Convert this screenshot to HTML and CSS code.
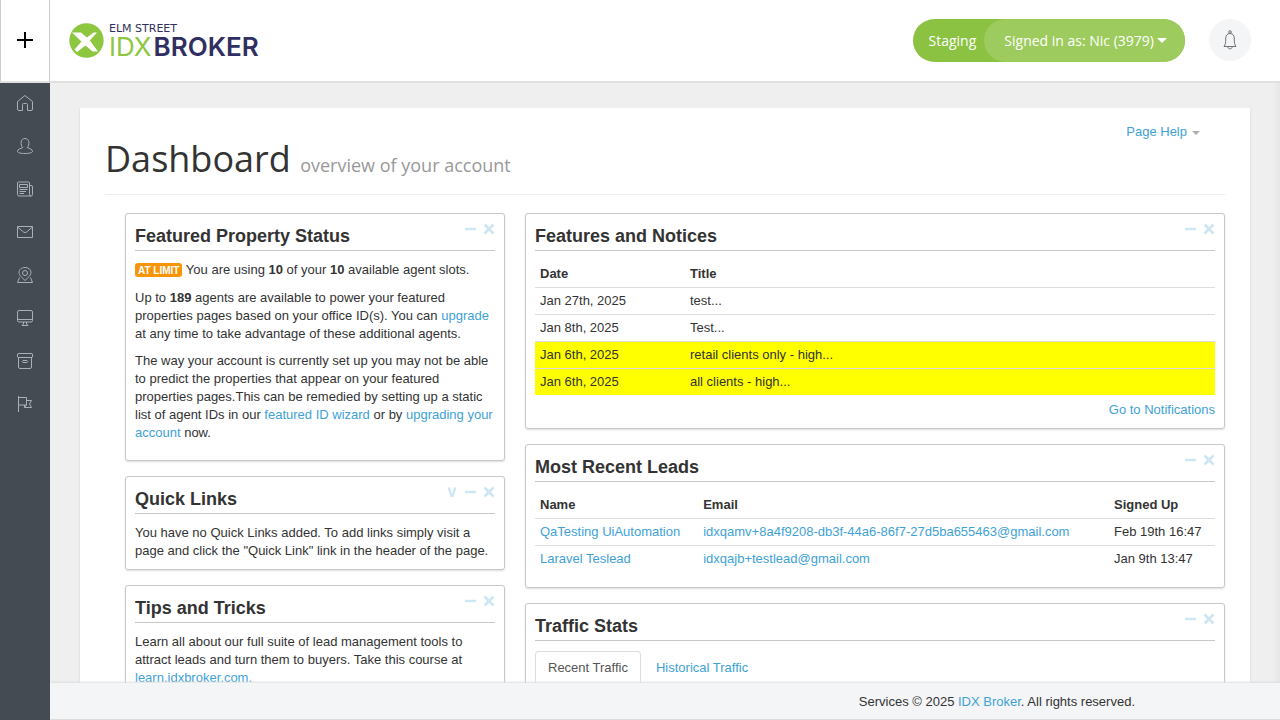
FILE: index.html
```html
<!DOCTYPE html>
<html lang="en">
<head>
<meta charset="utf-8">
<title>Dashboard - IDX Broker</title>
<link rel="stylesheet" href="styles.css">
</head>
<body>
<svg class="sprite" aria-hidden="true">
  <symbol id="minus" viewBox="0 0 12 12"><path d="M1 6H12" stroke="currentColor" stroke-width="2.400" fill="none"/></symbol>
  <symbol id="close" viewBox="0 0 12 12"><path d="M1.500 1.500L10.500 10.500M10.500 1.500L1.500 10.500" stroke="currentColor" stroke-width="2.500" fill="none"/></symbol>
  <symbol id="down" viewBox="0 0 12 12"><path d="M2.500 1.500H5L7 8L9 1.500H11.500L8.300 11H5.700Z" fill="currentColor"/></symbol>
</svg>
<header class="topbar">
  <button class="add" aria-label="Add"><svg width="16" height="16" viewBox="0 0 16 16"><path d="M8 0V16M0 8H16" stroke="#000" stroke-width="2"/></svg></button>
  <a class="logo" href="#">
    <svg width="35" height="35" viewBox="0 0 35 35"><circle cx="17.500" cy="17.500" r="17.200" fill="#8dc63f"/><path d="M3 9.500H12L18 14.500L24.500 9.500H28L20.800 17.500L29 28.500H23.500L16.500 22.500L8 29L5.500 26.500L12.500 18.500Z" fill="#fff"/></svg>
    <span class="logo-words"><span class="logo-small">ELM STREET</span><span class="logo-big"><span class="logo-idx">IDX</span>BROKER</span></span>
  </a>
  <div class="account">
    <span class="env">Staging</span>
    <button class="user">Signed in as: Nic (3979)<span class="caret"></span></button>
  </div>
  <button class="bell" aria-label="Notifications"><svg width="14" height="20" viewBox="0 0 14 20" fill="none" stroke="#6b7278"><circle cx="7" cy="2" r="1.300"/><path d="M1 16.500C2.500 14.500 2.700 13 2.700 9C2.700 5.500 4 3.500 7 3.500S11.300 5.500 11.300 9C11.300 13 11.500 14.500 13 16.500ZM4.800 16.500C4.800 19.700 9.200 19.700 9.200 16.500"/></svg></button>
</header>
<div class="shell">
  <nav class="sidebar" aria-label="Main">
    <a href="#" aria-label="Home"><svg viewBox="0 0 16 16"><path d="M.5 6.500L8 .5L15.500 6.500V14Q15.500 15.500 14 15.500H10.500V9.500Q10.500 8.500 9.500 8.500H6.500Q5.500 8.500 5.500 9.500V15.500H2Q.5 15.500 .5 14Z"/></svg></a>
    <a href="#" aria-label="Leads"><svg viewBox="0 0 16 16"><path d="M5.800 9.500C3.200 7 3.200 .5 8 .5S12.800 7 10.200 9.500C12.500 10.800 15.500 11 15.500 13.500C15.500 14.700 12 15.500 8 15.500S.5 14.700 .5 13.500C.5 11 3.500 10.800 5.800 9.500Z"/></svg></a>
    <a href="#" aria-label="Content"><svg viewBox="0 0 16 16"><path d="M12.500 13.500V2Q12.500 1 11.500 1H1.500Q.5 1 .5 2V13.500Q.5 15 2 15H14Q15.500 15 15.500 13.500V6Q15.500 4.500 14 4.500H12.500M12.500 13.500Q12.500 15 14 15M2.500 3.500H10.500V6.500H2.500ZM2.500 8.500H10.500M2.500 10.500H9M2.500 12.500H7"/></svg></a>
    <a href="#" aria-label="Messages"><svg viewBox="0 0 16 16"><path d="M.5 2.500H15.500V13.500H.5ZM.5 3L6.500 8Q8 9.200 9.500 8L15.500 3"/></svg></a>
    <a href="#" aria-label="Map"><svg viewBox="0 0 16 16"><circle cx="8" cy="6" r="2.500"/><path d="M8 13.500C5 10.500 2 8.500 2 5.500C2 2.500 4.500 .5 8 .5S14 2.500 14 5.500C14 8.500 11 10.500 8 13.500ZM2.500 10.500L.5 15.500H15.500L13.500 10.500"/></svg></a>
    <a href="#" aria-label="Design"><svg viewBox="0 0 16 16"><path d="M2 .5H14Q15.500 .5 15.500 2V10.500Q15.500 12 14 12H2Q.5 12 .5 10.500V2Q.5 .5 2 .5ZM.5 9.500H15.500M6.500 12V14L5 15.500H11L9.500 14V12"/></svg></a>
    <a href="#" aria-label="Archive"><svg viewBox="0 0 16 16"><path d="M1 .5H15L15.500 1V4L15 4.500H1L.5 4V1ZM1.500 4.500V14Q1.500 15.500 3 15.500H13Q14.500 15.500 14.500 14V4.500M6 7.500H10Q11.500 8.500 10 9.500H6Q4.500 8.500 6 7.500Z"/></svg></a>
    <a href="#" aria-label="Reports"><svg viewBox="0 0 16 16"><path d="M1.500 0V16M1.500 1.500H9.500V9H1.500M9.500 4.500H14.500L12.500 8L14.500 11.500H7.500V9M9.500 9L7.500 11.500"/></svg></a>
  </nav>
  <div class="main">
    <main class="scroll">
      <div class="sheet">
        <div class="page-head">
          <a class="help" href="#">Page Help<span class="caret"></span></a>
          <h1>Dashboard <small>overview of your account</small></h1>
        </div>
        <div class="columns">
          <div class="column narrow">
            <section class="widget">
              <div class="widget-head"><h2>Featured Property Status</h2><div class="tools"><button aria-label="Minimize"><svg><use href="#minus"/></svg></button><button aria-label="Close"><svg><use href="#close"/></svg></button></div></div>
              <p class="status"><span class="badge">AT LIMIT</span> You are using <b>10</b> of your <b>10</b> available agent slots.</p>
              <p>Up to <b>189</b> agents are available to power your featured properties pages based on your office ID(s). You can <a href="#">upgrade</a> at any time to take advantage of these additional agents.</p>
              <p>The way your account is currently set up you may not be able to predict the properties that appear on your featured properties pages.This can be remedied by setting up a static list of agent IDs in our <a href="#">featured ID wizard</a> or by <a href="#">upgrading your account</a> now.</p>
            </section>
            <section class="widget">
              <div class="widget-head"><h2>Quick Links</h2><div class="tools"><button aria-label="Expand"><svg><use href="#down"/></svg></button><button aria-label="Minimize"><svg><use href="#minus"/></svg></button><button aria-label="Close"><svg><use href="#close"/></svg></button></div></div>
              <div>You have no Quick Links added. To add links simply visit a page and click the "Quick Link" link in the header of the page.</div>
            </section>
            <section class="widget">
              <div class="widget-head"><h2>Tips and Tricks</h2><div class="tools"><button aria-label="Minimize"><svg><use href="#minus"/></svg></button><button aria-label="Close"><svg><use href="#close"/></svg></button></div></div>
              <p>Learn all about our full suite of lead management tools to attract leads and turn them to buyers. Take this course at <a href="#">learn.idxbroker.com.</a></p>
            </section>
          </div>
          <div class="column wide">
            <section class="widget">
              <div class="widget-head"><h2>Features and Notices</h2><div class="tools"><button aria-label="Minimize"><svg><use href="#minus"/></svg></button><button aria-label="Close"><svg><use href="#close"/></svg></button></div></div>
              <table class="notices">
                <thead><tr><th>Date</th><th>Title</th></tr></thead>
                <tbody>
                  <tr><td>Jan 27th, 2025</td><td>test...</td></tr>
                  <tr><td>Jan 8th, 2025</td><td>Test...</td></tr>
                  <tr class="high"><td>Jan 6th, 2025</td><td>retail clients only - high...</td></tr>
                  <tr class="high"><td>Jan 6th, 2025</td><td>all clients - high...</td></tr>
                </tbody>
              </table>
              <div class="more"><a href="#">Go to Notifications</a></div>
            </section>
            <section class="widget">
              <div class="widget-head"><h2>Most Recent Leads</h2><div class="tools"><button aria-label="Minimize"><svg><use href="#minus"/></svg></button><button aria-label="Close"><svg><use href="#close"/></svg></button></div></div>
              <table class="leads">
                <thead><tr><th>Name</th><th>Email</th><th>Signed Up</th></tr></thead>
                <tbody>
                  <tr><td><a href="#">QaTesting UiAutomation</a></td><td><a href="#">idxqamv+8a4f9208-db3f-44a6-86f7-27d5ba655463@gmail.com</a></td><td>Feb 19th 16:47</td></tr>
                  <tr><td><a href="#">Laravel Teslead</a></td><td><a href="#">idxqajb+testlead@gmail.com</a></td><td>Jan 9th 13:47</td></tr>
                </tbody>
              </table>
            </section>
            <section class="widget">
              <div class="widget-head"><h2>Traffic Stats</h2><div class="tools"><button aria-label="Minimize"><svg><use href="#minus"/></svg></button><button aria-label="Close"><svg><use href="#close"/></svg></button></div></div>
              <div class="tabs"><a class="tab active" href="#">Recent Traffic</a><a class="tab" href="#">Historical Traffic</a></div>
            </section>
          </div>
        </div>
      </div>
    </main>
    <footer class="footer">Services © 2025 <a href="#">IDX Broker</a>. All rights reserved.</footer>
  </div>
</div>
</body>
</html>
```
FILE: styles.css
```css
* { box-sizing: border-box; }
body {
  margin: 0;
  height: 100vh;
  display: flex;
  flex-direction: column;
  overflow: hidden;
  background: #efefef;
  color: #333;
  font: 13px/18px "Liberation Sans", Arial, sans-serif;
}
a { color: #3ea2d6; text-decoration: none; }
button { padding: 0; border: 0; background: none; color: inherit; font: inherit; cursor: pointer; }
.sprite { display: none; }

.topbar {
  display: flex;
  align-items: center;
  flex: none;
  height: 83px;
  padding-right: 29px;
  background: #fff;
  border-bottom: 2px solid #e0e0e0;
}
.add {
  display: grid;
  place-items: center;
  align-self: stretch;
  width: 50px;
  padding-bottom: 1px;
  border: solid #ccc;
  border-width: 0 1px;
}
.logo { display: flex; gap: 5px; margin-left: 19px; color: #2f3061; font-family: Inter, sans-serif; }
.logo-words { display: flex; flex-direction: column; }
.logo-small { font: 11px/11px "DejaVu Sans", sans-serif; }
.logo-big { font-size: 26px; line-height: 25px; font-weight: 600; }
.logo-idx { margin-right: 2px; color: #8dc63f; font-weight: 400; }
.account {
  display: flex;
  align-items: center;
  margin-left: auto;
  height: 43px;
  border-radius: 22px;
  background: #8bc242;
  color: #fff;
  font: 14px/20px "Open Sans", sans-serif;
}
.env { padding: 0 8px 0 16px; }
.user {
  display: flex;
  align-items: center;
  gap: 3px;
  height: 43px;
  padding: 0 18px 0 20px;
  border-radius: 22px;
  background: #9dcb5d;
}
.caret {
  display: inline-block;
  border: 5px solid transparent;
  border-top-color: currentColor;
  border-bottom: 0;
}
.bell {
  display: grid;
  place-items: center;
  width: 42px;
  height: 42px;
  margin: 0 0 1px 24px;
  border-radius: 50%;
  background: #f4f5f7;
}

.shell { display: flex; flex: 1; min-height: 0; }
.sidebar { position: relative; z-index: 1; flex: none; width: 50px; background: #444b52; }
.sidebar a { display: grid; place-items: center; height: 43px; padding-bottom: 3px; }
.sidebar svg { width: 16px; height: 16px; fill: none; stroke: #a9b0b6; }
.main { display: flex; flex-direction: column; flex: 1; min-width: 0; }
.scroll {
  flex: 1;
  min-height: 0;
  padding: 25px 30px;
  overflow-y: auto;
  scrollbar-width: none;
  background: linear-gradient(to left, #e6e6e6, #efefef 8px);
}
.sheet { padding: 15px 25px 25px; background: #fff; box-shadow: 0 1px 2px #ccc; }
.page-head { border-bottom: 1px solid #eee; margin-bottom: 18px; }
.help { display: block; padding-right: 25px; text-align: right; }
.help .caret { margin-left: 5px; color: #b0b0b0; border-width: 4px 4px 0; vertical-align: middle; }
h1 { margin: 0; padding-bottom: 17px; font: 400 36px/36px "Open Sans", sans-serif; }
h1 small { color: #999; font-size: 18px; line-height: 18px; font-weight: 400; }

.columns { display: flex; gap: 20px; padding-left: 20px; }
.column { display: flex; flex-direction: column; gap: 15px; min-width: 0; }
.narrow { flex: 19 1 0; }
.wide { flex: 35 1 0; }
.widget {
  padding: 0 9px 9px;
  border: 1px solid #c8c8c8;
  border-radius: 3px;
  box-shadow: 0 1px 2px #ddd;
}
.widget-head {
  display: flex;
  justify-content: space-between;
  margin-bottom: 10px;
  padding-top: 9px;
  border-bottom: 1px solid #c8c8c8;
}
h2 { margin: 0; font-size: 18px; line-height: 27px; }
.tools { display: flex; gap: 7px; height: 12px; color: #cce6f4; }
.tools svg { display: block; width: 12px; height: 12px; }
p { margin: 0 0 9px; }
.status { margin-bottom: 10px; }
.badge {
  padding: 2px 3px 1px;
  border-radius: 3px;
  background: #f89406;
  color: #fff;
  font-size: 10px;
  line-height: 14px;
  font-weight: 700;
}
table { width: 100%; margin-bottom: 6px; border-collapse: collapse; table-layout: fixed; }
th, td { padding: 4px 5px; text-align: left; }
td { border-top: 1px solid #ddd; }
.high { background: #ff0; }
.notices th:first-child { width: 150px; }
.leads th:first-child { width: 24%; }
.leads th:last-child { width: 106px; }
.more { text-align: right; }
.tabs { display: flex; gap: 2px; border-bottom: 1px solid #ddd; }
.tab { padding: 7px 12px 8px; border: 1px solid transparent; border-bottom: 0; border-radius: 4px 4px 0 0; }
.tab.active { border-color: #ddd; color: #555; }

.footer {
  flex: none;
  padding: 10px 145px 8px 20px;
  background: #f4f5f7;
  border-bottom: 1px solid #ddd;
  box-shadow: 0 -1px 2px #ddd;
  text-align: right;
}
```
